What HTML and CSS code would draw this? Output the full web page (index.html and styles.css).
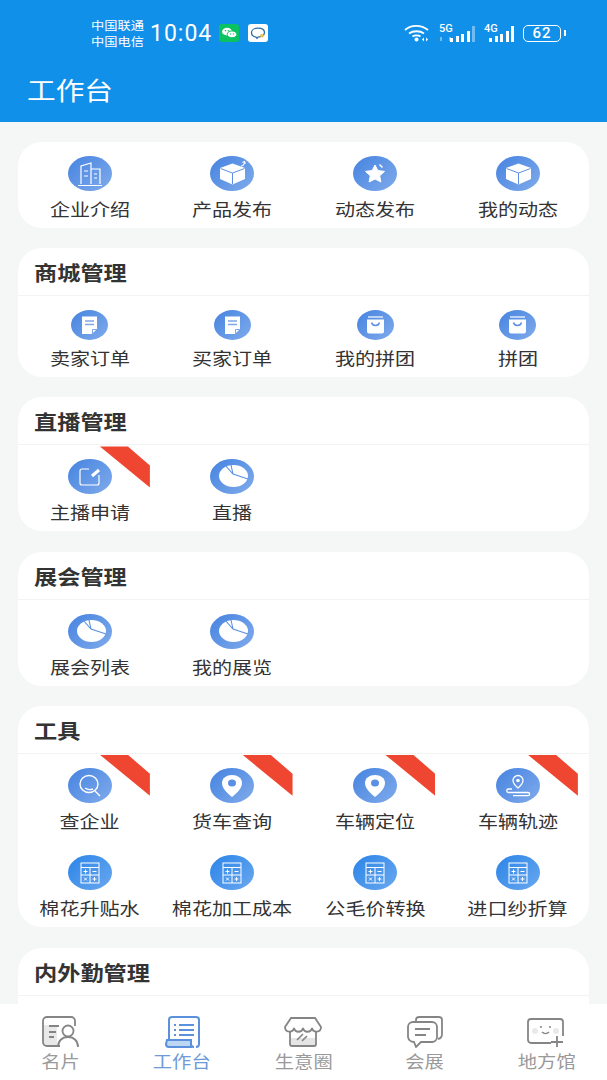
FILE: index.html
```html
<!DOCTYPE html>
<html>
  <head>
    <meta name="viewport" content="width=device-width, initial-scale=1.0" />
    <meta charset="utf-8" />
    <title>工作台</title>
    <link rel="stylesheet" href="styles.css">
  </head>
  <body>
    <!-- shared icon shapes, all drawn on the 44x35 oval -->
    <svg class="defs" width="0" height="0">
      <symbol id="i-building" viewBox="0 0 44 35">
        <g fill="none" stroke="#fff" stroke-width="1.2">
          <path d="M13 28V10l10-3v21M23 13h9v15M10 29.500h24M16 15h4M16 20h4M26 18h3M26 22h3" />
        </g>
      </symbol>
      <symbol id="i-cube" viewBox="0 0 44 35">
        <path d="M22.500 7.500l12.500 4.500v11l-12.500 5.500-12.500-5.500v-11z" fill="#fff" />
        <path d="M10.500 12.500l12 4.500 12-4.500M22.500 17v11" fill="none" stroke="#5b8fe3" stroke-width="1" />
      </symbol>
      <symbol id="i-doc" viewBox="0 0 37 30">
        <path d="M11 6.500h15v12.500l-5 5H11z" fill="#fff" />
        <path d="M14 11h9M14 14.500h9" stroke="#7fa6e6" stroke-width="1.300" fill="none" />
        <path d="M21.500 24v-4.500H26" stroke="#7fa6e6" stroke-width="1" fill="none" />
      </symbol>
      <symbol id="i-bag" viewBox="0 0 37 30">
        <path d="M10 9.500h17v12a2 2 0 0 1-2 2H12a2 2 0 0 1-2-2z" fill="#fff" />
        <path d="M11 7h15" stroke="#fff" stroke-width="1.200" fill="none" />
        <path d="M14.500 12.500c1 4 7 4 8 0" stroke="#5b8fe3" stroke-width="1.400" fill="none" />
      </symbol>
      <symbol id="i-pie" viewBox="0 0 44 35">
        <ellipse cx="23.500" cy="17" rx="14.500" ry="11" fill="#fff" />
        <path d="M15 6l8 9 15 5M23 15l-2-9" fill="none" stroke="#5b8fe3" stroke-width="1.100" />
      </symbol>
      <symbol id="i-pin" viewBox="0 0 44 35">
        <path d="M22 29c-6-5-10-9-10-14 0-5 4.500-8 10-8s10 3 10 8c0 5-4 9-10 14z" fill="#fff" />
        <ellipse cx="22" cy="15" rx="4" ry="3.500" fill="#5b8fe3" />
      </symbol>
      <symbol id="i-calc" viewBox="0 0 44 35">
        <g fill="none" stroke="#fff" stroke-width="1">
          <rect x="13" y="8" width="18" height="20" />
          <path d="M13 12.500h18M22 12.500V28M13 20h18" />
          <path d="M15.500 16.500h4M17.500 14.500v4M24.500 16.500h4M16 22.500l3 3M19 22.500l-3 3M24.500 24h4M26.500 22v4" />
        </g>
      </symbol>
    </svg>

    <header class="appbar">
      <div class="status">
        <div class="status__carrier"><span>中国联通</span><span>中国电信</span></div>
        <span class="status__time">10:04</span>
        <svg class="status__app" viewBox="0 0 20 20" preserveAspectRatio="none">
          <rect width="20" height="20" rx="3" fill="#0bc160" />
          <ellipse cx="8" cy="8.500" rx="5" ry="4.200" fill="#fff" />
          <ellipse cx="13" cy="11.500" rx="4.800" ry="3.800" fill="#fff" stroke="#0bc160" />
          <circle cx="6.500" cy="7.500" r=".8" fill="#0bc160" /><circle cx="9.500" cy="7.500" r=".8" fill="#0bc160" />
          <circle cx="11.500" cy="11" r=".7" fill="#0bc160" /><circle cx="14.500" cy="11" r=".7" fill="#0bc160" />
        </svg>
        <svg class="status__app" viewBox="0 0 20 20" preserveAspectRatio="none">
          <rect width="20" height="20" rx="3" fill="#fff" />
          <path d="M10 4.500c-4 0-6.500 2.200-6.500 5s2 4.700 4.500 5l1 1.500 1-1.500c3.500 0 6.500-2 6.500-5s-2.500-5-6.500-5z" fill="none" stroke="#2c6fa8" stroke-width="1.300" />
          <circle cx="14" cy="13" r="2" fill="#f0c040" />
        </svg>
        <div class="status__right">
          <svg width="26" height="18" viewBox="0 0 26 18">
            <g fill="none" stroke="#fff" stroke-width="1.800">
              <path d="M1 6c6-5.500 16-5.500 23 0M5 9.500c4-3 11-3 15 0M8.500 12.500c2-1.500 6-1.500 8 0" />
            </g>
            <circle cx="12.500" cy="15.500" r="2" fill="#fff" />
            <path d="M20 13.500v4l-2-2zM22 13.500v4l2-2z" fill="#fff" />
          </svg>
          <div class="signal signal--5g">
            <span class="signal__label">5G</span>
            <span class="signal__arrows"></span>
            <i class="bar bar--1"></i><i class="bar bar--2"></i><i class="bar bar--3"></i><i class="bar bar--4"></i><i class="bar bar--5 bar--dim"></i>
          </div>
          <div class="signal">
            <span class="signal__label">4G</span>
            <i class="bar bar--1"></i><i class="bar bar--2"></i><i class="bar bar--3"></i><i class="bar bar--4"></i><i class="bar bar--5"></i>
          </div>
          <div class="battery"><span class="battery__level">62</span></div>
        </div>
      </div>
      <h1 class="appbar__title"><span>工作台</span></h1>
    </header>

    <main class="content">
      <section class="card">
        <div class="grid">
          <a class="item"><span class="icon"><svg><use href="#i-building" /></svg></span><span class="label">企业介绍</span></a>
          <a class="item">
            <span class="icon">
              <svg viewBox="0 0 44 35">
                <use href="#i-cube" width="44" height="35" />
                <path d="M31 10c2 0 3-1 3.500-3.500M32.500 6.500l2-1 1 2" fill="none" stroke="#fff" stroke-width="1.100" />
              </svg>
            </span>
            <span class="label">产品发布</span>
          </a>
          <a class="item">
            <span class="icon">
              <svg viewBox="0 0 44 35">
                <path d="M22 9l2.800 5.500 6.700.9-4.800 4.400 1.200 6.200-5.900-3-5.900 3 1.200-6.200-4.800-4.400 6.700-.9z" fill="#fff" stroke="#fff" stroke-linejoin="round" />
                <path d="M26.500 8.500l3 3" stroke="#fff" stroke-width="1.400" />
              </svg>
            </span>
            <span class="label">动态发布</span>
          </a>
          <a class="item"><span class="icon"><svg><use href="#i-cube" /></svg></span><span class="label">我的动态</span></a>
        </div>
      </section>

      <section class="card">
        <h2 class="card__title"><span>商城管理</span></h2>
        <div class="grid">
          <a class="item"><span class="icon icon--sm"><svg><use href="#i-doc" /></svg></span><span class="label">卖家订单</span></a>
          <a class="item"><span class="icon icon--sm"><svg><use href="#i-doc" /></svg></span><span class="label">买家订单</span></a>
          <a class="item"><span class="icon icon--sm"><svg><use href="#i-bag" /></svg></span><span class="label">我的拼团</span></a>
          <a class="item"><span class="icon icon--sm"><svg><use href="#i-bag" /></svg></span><span class="label">拼团</span></a>
        </div>
      </section>

      <section class="card">
        <h2 class="card__title"><span>直播管理</span></h2>
        <div class="grid">
          <a class="item item--new">
            <span class="icon">
              <svg viewBox="0 0 44 35">
                <path d="M21 10h-7a2 2 0 0 0-2 2v12a2 2 0 0 0 2 2h15a2 2 0 0 0 2-2v-8" fill="none" stroke="#fff" stroke-width="1.200" />
                <path d="M24 17l7-6" stroke="#fff" stroke-width="3" />
              </svg>
            </span>
            <span class="label">主播申请</span>
          </a>
          <a class="item"><span class="icon"><svg><use href="#i-pie" /></svg></span><span class="label">直播</span></a>
        </div>
      </section>

      <section class="card">
        <h2 class="card__title"><span>展会管理</span></h2>
        <div class="grid">
          <a class="item"><span class="icon"><svg><use href="#i-pie" /></svg></span><span class="label">展会列表</span></a>
          <a class="item"><span class="icon"><svg><use href="#i-pie" /></svg></span><span class="label">我的展览</span></a>
        </div>
      </section>

      <section class="card">
        <h2 class="card__title"><span>工具</span></h2>
        <div class="grid">
          <a class="item item--new">
            <span class="icon">
              <svg viewBox="0 0 44 35">
                <ellipse cx="21" cy="16" rx="9" ry="8.500" fill="none" stroke="#fff" stroke-width="1.400" />
                <path d="M17 20c2 1.500 5 2 8 1M27 23l5 5" fill="none" stroke="#fff" stroke-width="1.400" />
              </svg>
            </span>
            <span class="label">查企业</span>
          </a>
          <a class="item item--new"><span class="icon"><svg><use href="#i-pin" /></svg></span><span class="label">货车查询</span></a>
          <a class="item item--new"><span class="icon"><svg><use href="#i-pin" /></svg></span><span class="label">车辆定位</span></a>
          <a class="item item--new">
            <span class="icon">
              <svg viewBox="0 0 44 35">
                <path d="M22 20c-3-2.500-5-5-5-7.500a5 5 0 0 1 10 0c0 2.500-2 5-5 7.500z" fill="none" stroke="#fff" stroke-width="1.300" />
                <circle cx="22" cy="12.500" r="1.800" fill="#fff" />
                <path d="M16 21h-3.500a1.700 1.700 0 0 0 0 3.500H32a1.600 1.600 0 0 1 0 3.200H17" fill="none" stroke="#fff" stroke-width="1.300" />
              </svg>
            </span>
            <span class="label">车辆轨迹</span>
          </a>
          <a class="item"><span class="icon icon--calc"><svg><use href="#i-calc" /></svg></span><span class="label">棉花升贴水</span></a>
          <a class="item"><span class="icon icon--calc"><svg><use href="#i-calc" /></svg></span><span class="label">棉花加工成本</span></a>
          <a class="item"><span class="icon icon--calc"><svg><use href="#i-calc" /></svg></span><span class="label">公毛价转换</span></a>
          <a class="item"><span class="icon icon--calc"><svg><use href="#i-calc" /></svg></span><span class="label">进口纱折算</span></a>
        </div>
      </section>

      <section class="card card--cut">
        <h2 class="card__title"><span>内外勤管理</span></h2>
      </section>
    </main>

    <nav class="tabbar">
      <a class="tab">
        <svg class="tab__icon" viewBox="0 0 40 32">
          <path d="M2 9h14v21H6a4 4 0 0 1-4-4z" fill="#e9e9e9" />
          <path d="M19 30H6a4 4 0 0 1-4-4V5a4 4 0 0 1 4-4h24a4 4 0 0 1 4 4v5" fill="none" stroke="#858585" stroke-width="1.800" />
          <path d="M8 10h10M8 16h7M8 21h5" stroke="#858585" stroke-width="1.800" />
          <circle cx="27" cy="15" r="5.500" fill="#fff" stroke="#858585" stroke-width="1.800" />
          <path d="M17 31c0-6 4-10 10-10s10 4 10 10" fill="none" stroke="#858585" stroke-width="1.800" />
        </svg>
        <span class="tab__label">名片</span>
      </a>
      <a class="tab tab--active">
        <svg class="tab__icon" viewBox="0 0 40 32">
          <path d="M7 24V4a3 3 0 0 1 3-3h24a3 3 0 0 1 3 3v24a3 3 0 0 1-3 3" fill="none" stroke="#5a90dc" stroke-width="2" />
          <path d="M5 24h24v7H7a3 3 0 0 1-3-3z" fill="#bcd6f4" stroke="#5a90dc" stroke-width="2" />
          <path d="M29 24v4a3 3 0 0 0 3 3" fill="none" stroke="#5a90dc" stroke-width="2" />
          <path d="M12 9h2M17 9h15M12 14h2M17 14h15M12 19h2M17 19h15" stroke="#5a90dc" stroke-width="1.800" />
        </svg>
        <span class="tab__label">工作台</span>
      </a>
      <a class="tab">
        <svg class="tab__icon" viewBox="0 0 40 32">
          <path d="M8 22h24v8H8z" fill="#e5e5e5" />
          <path d="M7 13v15a2 2 0 0 0 2 2h22a2 2 0 0 0 2-2V13" fill="none" stroke="#858585" stroke-width="1.800" />
          <path d="M8 2h24l6 9c0 6-8 6-9 1-1 5-8 5-9 0-1 5-8 5-9 0-1 5-9 5-9-1z" fill="#fff" stroke="#858585" stroke-width="1.800" />
          <path d="M14 24l6-6M19 25l5-5" stroke="#858585" stroke-width="1.600" />
        </svg>
        <span class="tab__label">生意圈</span>
      </a>
      <a class="tab">
        <svg class="tab__icon" viewBox="0 0 40 32">
          <path d="M11 5V4a3 3 0 0 1 3-3h20a3 3 0 0 1 3 3v14a5 5 0 0 1-4 5" fill="none" stroke="#858585" stroke-width="1.800" />
          <path d="M8 6h19a5 5 0 0 1 5 5v10a5 5 0 0 1-5 5H16l-5 5-2-5a6 6 0 0 1-6-5V11a5 5 0 0 1 5-5z" fill="#fff" stroke="#858585" stroke-width="1.800" />
          <path d="M10 13h15M10 19h11" stroke="#858585" stroke-width="1.800" />
        </svg>
        <span class="tab__label">会展</span>
      </a>
      <a class="tab">
        <svg class="tab__icon" viewBox="0 0 40 32">
          <path d="M25 27H5a3 3 0 0 1-3-3V6a3 3 0 0 1 3-3h29a3 3 0 0 1 3 3v14" fill="none" stroke="#858585" stroke-width="1.800" />
          <path d="M15 10v2M24 10v2M16 16c2 2 5 2 7 0" fill="none" stroke="#858585" stroke-width="1.500" />
          <path d="M31 20v11M25 26h12" stroke="#858585" stroke-width="1.800" />
          <circle cx="9" cy="15" r="3" fill="#e9e9e9" /><circle cx="30" cy="15" r="3" fill="#e9e9e9" />
        </svg>
        <span class="tab__label">地方馆</span>
      </a>
    </nav>
  </body>
</html>
```

FILE: styles.css
```css
body {
  --color-blue: #1190ea;
  --color-text: #333333;
  --color-line: #f3f3f3;

  margin: 0;
  height: 100vh;
  display: flex;
  flex-direction: column;
  overflow: hidden;
  background: #f5f6f6;
  color: var(--color-text);
  font-family: "Noto Sans CJK SC", "Noto Sans", sans-serif;
}

.defs {
  position: absolute;
}

a {
  color: inherit;
  text-decoration: none;
}

/* app bar */

.appbar {
  height: 122px;
  flex: none;
  background: var(--color-blue);
  color: #ffffff;
}

.status {
  height: 66px;
  display: flex;
  align-items: center;
  padding: 0 42px 0 91px;
}

.status__carrier {
  width: 59px;
  display: flex;
  flex-direction: column;
  font-size: 11.500px;
  line-height: 16px;
}

.status__carrier span {
  transform: scaleX(1.150);
  transform-origin: left center;
}

.status__time {
  width: 69px;
  font-family: Roboto, sans-serif;
  font-size: 23px;
  letter-spacing: 1px;
}

.status__app {
  width: 20px;
  height: 18px;
  margin-right: 9px;
}

.status__right {
  margin-left: auto;
  display: flex;
  align-items: center;
  gap: 9px;
}

.signal {
  position: relative;
  width: 30px;
  height: 18px;
  display: flex;
  align-items: flex-end;
  justify-content: flex-end;
  gap: 2.500px;
}

.signal--5g {
  width: 36px;
}

.signal__label {
  position: absolute;
  left: 0;
  top: -2px;
  font-family: Roboto, sans-serif;
  font-size: 11px;
  font-weight: 500;
}

.signal__arrows {
  position: absolute;
  left: 1px;
  bottom: 1px;
  width: 7px;
  height: 4px;
  border-left: 2px solid rgba(255, 255, 255, 0.4);
  border-right: 2px solid rgba(255, 255, 255, 0.4);
}

.bar {
  width: 3px;
  background: #ffffff;
}

.bar--1 { height: 4px; }
.bar--2 { height: 6px; }
.bar--3 { height: 8px; }
.bar--4 { height: 11px; }
.bar--5 { height: 16px; }

.bar--dim {
  opacity: 0.4;
}

.battery {
  position: relative;
  width: 38px;
  height: 17px;
  box-sizing: border-box;
  margin-right: 4px;
  border: 1.500px solid #ffffff;
  border-radius: 5px;
  text-align: center;
  font-family: Roboto, sans-serif;
  font-size: 15px;
  font-weight: 500;
  line-height: 14px;
  letter-spacing: 1px;
}

.battery::after {
  content: "";
  position: absolute;
  right: -6px;
  top: 4px;
  width: 2px;
  height: 6px;
  background: #ffffff;
}

.appbar__title {
  margin: 0;
  padding-left: 27px;
  font-size: 24.500px;
  font-weight: 400;
  line-height: 48px;
}

.appbar__title span {
  display: inline-block;
  transform: scaleX(1.170);
  transform-origin: left center;
}

/* cards */

.content {
  flex: 1;
  min-height: 0;
  overflow: hidden;
  display: flex;
  flex-direction: column;
  gap: 20.200px;
  padding: 20px 18px 0;
}

.card {
  flex: none;
  background: #ffffff;
  border-radius: 24px;
}

/* last card runs on under the tab bar */
.card--cut {
  height: 120px;
  margin-top: 1px;
}

.card__title {
  margin: 0;
  height: 47px;
  padding-left: 16px;
  border-bottom: 1px solid var(--color-line);
  font-size: 20px;
  font-weight: 700;
  line-height: 50px;
}

.card__title span {
  display: inline-block;
  transform: scaleX(1.160);
  transform-origin: left center;
}

.grid {
  display: grid;
  grid-template-columns: repeat(4, 1fr);
  row-gap: 8px;
  padding: 0 0 7px 0.400px;
}

.item {
  position: relative;
  display: flex;
  flex-direction: column;
  align-items: center;
  padding-top: 14px;
}

/* red corner ribbon */
.item--new::after {
  content: "";
  position: absolute;
  left: 81.500px;
  top: 1px;
  width: 50px;
  height: 41px;
  background: #ee4630;
  clip-path: polygon(0 0, 28px 0, 50px 19px, 50px 41px);
}

.icon {
  width: 44px;
  height: 35px;
  flex: none;
  border-radius: 50%;
  background: linear-gradient(135deg, #4583e0, #80abeb);
}

.icon svg {
  display: block;
  width: 100%;
  height: 100%;
}

.icon--sm {
  width: 37px;
  height: 30px;
}

.icon--calc {
  background: linear-gradient(135deg, #2a84e8, #6aa8ef);
}

.label {
  margin-top: 6px;
  font-size: 17px;
  line-height: 24px;
  white-space: nowrap;
  transform: scaleX(1.180);
}

/* bottom tabs */

.tabbar {
  height: 76px;
  flex: none;
  display: grid;
  grid-template-columns: repeat(5, 1fr);
  background: #ffffff;
}

.tab {
  display: flex;
  flex-direction: column;
  align-items: center;
  padding-top: 12px;
  color: #9a9a9a;
}

.tab--active {
  color: #6f9ad8;
}

.tab__icon {
  width: 40px;
  height: 32px;
}

.tab__label {
  margin-top: 1px;
  font-size: 16.500px;
  line-height: 24px;
  transform: scaleX(1.170);
}
```
